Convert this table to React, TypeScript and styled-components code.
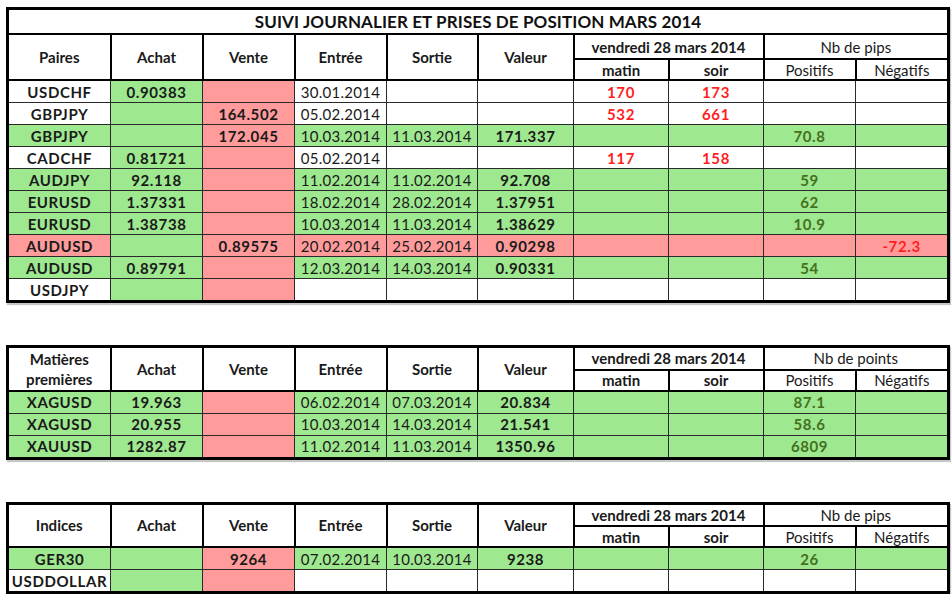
import React from "react";
import styled, { createGlobalStyle } from "styled-components";

const GlobalStyle = createGlobalStyle`
  html, body { margin: 0; padding: 0; background: #ffffff; }
  body { font-family: Lato, "Open Sans", "Liberation Sans", sans-serif; color: #1a1a1a; }
`;

type Bg = "w" | "g" | "p";
type Tone = "d" | "r" | "g";

const BG: Record<Bg, string> = { w: "#ffffff", g: "#9ee88f", p: "#ff9b9b" };
const TONE: Record<Tone, string> = { d: "#1a1a1a", r: "#ff1f1f", g: "#44701f" };

const Page = styled.div`
  display: flex;
  flex-direction: column;
  gap: 42px;
  padding: 7px 0 0 6px;
`;

const Sheet = styled.table`
  border-collapse: collapse;
  table-layout: fixed;
  width: 941px;
  border: 3px solid #000;
  box-shadow: 1px 2px 1px rgba(0, 0, 0, 0.22);
`;

const TitleCell = styled.th`
  height: 23px;
  padding: 0;
  border: 2px solid #000;
  font-size: 17px;
  font-weight: 700;
  text-align: center;
  vertical-align: middle;
  color: #111;
  line-height: 20px;
  letter-spacing: 0.1px;
`;

const HeadCell = styled.th<{ $bold?: boolean }>`
  padding: 0;
  border: 2px solid #000;
  font-size: 15px;
  font-weight: ${(p) => (p.$bold === false ? 400 : 700)};
  text-align: center;
  vertical-align: middle;
  color: #1a1a1a;
  line-height: 18px;
`;

const SubHeadCell = styled(HeadCell)`
  border-top-width: 1px;
`;

const Cell = styled.td<{ $bg: Bg; $tone: Tone; $bold: boolean }>`
  padding: 0;
  height: 21px;
  border: 1px solid #2a2a2a;
  background: ${(p) => BG[p.$bg]};
  color: ${(p) => TONE[p.$tone]};
  font-size: 15px;
  font-weight: ${(p) => (p.$bold ? 700 : 400)};
  text-align: center;
  vertical-align: middle;
  white-space: nowrap;
  letter-spacing: ${(p) => (p.$bold ? "0.6px" : "0.3px")};
  line-height: 18px;
`;

const HeadRow = styled.tr<{ $h: number }>`
  height: ${(p) => p.$h}px;
`;

type CellSpec = { v: string; bg: Bg; t: Tone; b: boolean };

// each row: background codes for the 10 columns, and values
const mk = (bgs: string, vals: string[], red: number[] = [], green: number[] = []): CellSpec[] =>
  bgs.split("").map((c, i) => ({
    v: vals[i] ?? "",
    bg: c as Bg,
    t: red.includes(i) ? "r" : green.includes(i) ? "g" : "d",
    b: i !== 3 && i !== 4,
  }));

const pairRows: CellSpec[][] = [
  mk("wgpwwwwwww", ["USDCHF", "0.90383", "", "30.01.2014", "", "", "170", "173"], [6, 7]),
  mk("wgpwwwwwww", ["GBPJPY", "", "164.502", "05.02.2014", "", "", "532", "661"], [6, 7]),
  mk("ggpggggggg", ["GBPJPY", "", "172.045", "10.03.2014", "11.03.2014", "171.337", "", "", "70.8"], [], [8]),
  mk("wgpwwwwwww", ["CADCHF", "0.81721", "", "05.02.2014", "", "", "117", "158"], [6, 7]),
  mk("ggpggggggg", ["AUDJPY", "92.118", "", "11.02.2014", "11.02.2014", "92.708", "", "", "59"], [], [8]),
  mk("ggpggggggg", ["EURUSD", "1.37331", "", "18.02.2014", "28.02.2014", "1.37951", "", "", "62"], [], [8]),
  mk("ggpggggggg", ["EURUSD", "1.38738", "", "10.03.2014", "11.03.2014", "1.38629", "", "", "10.9"], [], [8]),
  mk("pgpppppppp", ["AUDUSD", "", "0.89575", "20.02.2014", "25.02.2014", "0.90298", "", "", "", "-72.3"], [9]),
  mk("ggpggggggg", ["AUDUSD", "0.89791", "", "12.03.2014", "14.03.2014", "0.90331", "", "", "54"], [], [8]),
  mk("wgpwwwwwww", ["USDJPY"]),
];

const metalRows: CellSpec[][] = [
  mk("ggpggggggg", ["XAGUSD", "19.963", "", "06.02.2014", "07.03.2014", "20.834", "", "", "87.1"], [], [8]),
  mk("ggpggggggg", ["XAGUSD", "20.955", "", "10.03.2014", "14.03.2014", "21.541", "", "", "58.6"], [], [8]),
  mk("ggpggggggg", ["XAUUSD", "1282.87", "", "11.02.2014", "11.03.2014", "1350.96", "", "", "6809"], [], [8]),
];

const indexRows: CellSpec[][] = [
  mk("ggpggggggg", ["GER30", "", "9264", "07.02.2014", "10.03.2014", "9238", "", "", "26"], [], [8]),
  mk("wgpwwwwwww", ["USDDOLLAR"]),
];

const COLS = [103, 92, 92, 92, 91, 96, 95, 95, 92, 93];

const FirstHead = styled.span`
  display: block;
  line-height: 20px;
`;

type TableProps = {
  title?: string;
  first: React.ReactNode;
  unit: string;
  rows: CellSpec[][];
  h1: number;
  h2: number;
};

const TradeTable: React.FC<TableProps> = ({ title, first, unit, rows, h1, h2 }) => (
  <Sheet>
    <colgroup>
      {COLS.map((w, i) => (
        <col key={i} style={{ width: w }} />
      ))}
    </colgroup>
    <thead>
      {title && (
        <tr>
          <TitleCell colSpan={10}>{title}</TitleCell>
        </tr>
      )}
      <HeadRow $h={h1}>
        <HeadCell rowSpan={2}>{first}</HeadCell>
        <HeadCell rowSpan={2}>Achat</HeadCell>
        <HeadCell rowSpan={2}>Vente</HeadCell>
        <HeadCell rowSpan={2}>Entrée</HeadCell>
        <HeadCell rowSpan={2}>Sortie</HeadCell>
        <HeadCell rowSpan={2}>Valeur</HeadCell>
        <HeadCell colSpan={2}>vendredi 28 mars 2014</HeadCell>
        <HeadCell colSpan={2} $bold={false}>
          {unit}
        </HeadCell>
      </HeadRow>
      <HeadRow $h={h2}>
        <SubHeadCell>matin</SubHeadCell>
        <SubHeadCell>soir</SubHeadCell>
        <SubHeadCell $bold={false}>Positifs</SubHeadCell>
        <SubHeadCell $bold={false}>Négatifs</SubHeadCell>
      </HeadRow>
    </thead>
    <tbody>
      {rows.map((r, ri) => (
        <tr key={ri}>
          {r.map((c, ci) => (
            <Cell key={ci} $bg={c.bg} $tone={c.t} $bold={c.b}>
              {c.v}
            </Cell>
          ))}
        </tr>
      ))}
    </tbody>
  </Sheet>
);

export default function App() {
  return (
    <>
      <GlobalStyle />
      <Page>
        <TradeTable
          title="SUIVI JOURNALIER ET PRISES DE POSITION MARS 2014"
          first="Paires"
          unit="Nb de pips"
          rows={pairRows}
          h1={25}
          h2={21}
        />
        <TradeTable
          first={
            <>
              <FirstHead>Matières</FirstHead>
              <FirstHead>premières</FirstHead>
            </>
          }
          unit="Nb de points"
          rows={metalRows}
          h1={23}
          h2={21}
        />
        <TradeTable first="Indices" unit="Nb de pips" rows={indexRows} h1={23} h2={21} />
      </Page>
    </>
  );
}
